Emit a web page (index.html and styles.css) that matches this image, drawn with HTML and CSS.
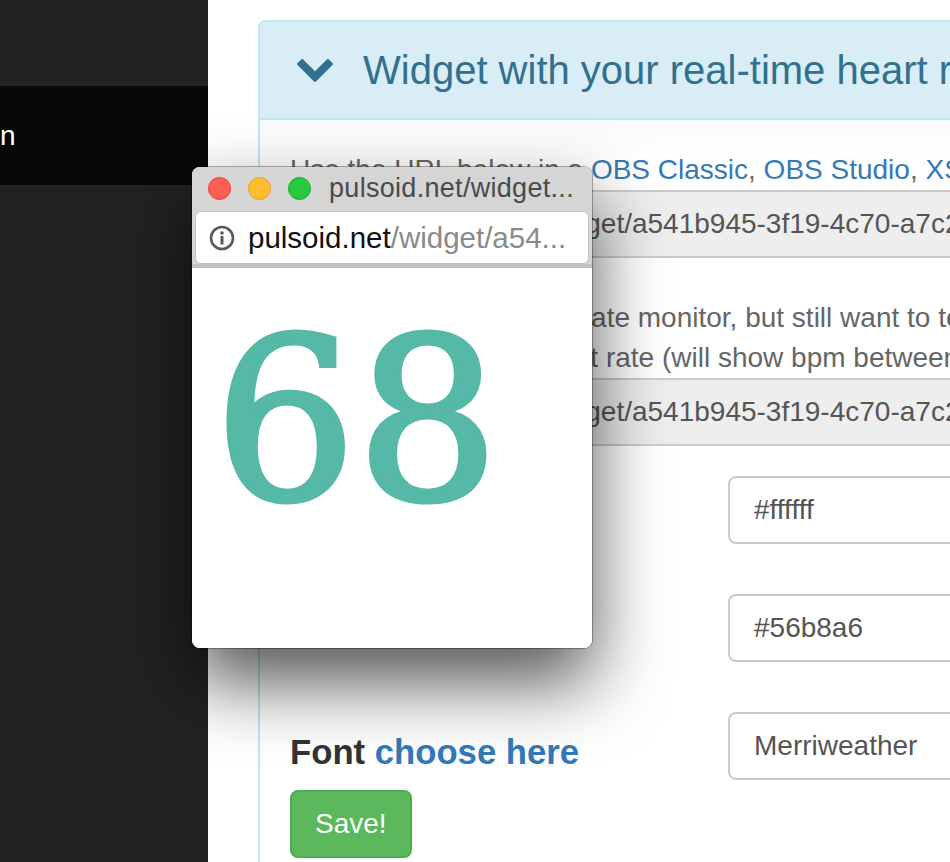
FILE: index.html
```html
<!DOCTYPE html>
<html>
<head>
<meta charset="utf-8">
<title>Pulsoid widget</title>
<link rel="stylesheet" href="styles.css">
</head>
<body>
<div class="layout">
  <aside class="sidebar">
    <div class="nav-item active"><span class="nav-text">n</span></div>
  </aside>
  <main class="main">
    <section class="panel">
      <div class="panel-heading">
        <svg class="chevron" viewBox="90 533 1612 1035" width="36" height="23" aria-hidden="true">
          <path fill="#31708f" d="M1683 808l-742 741q-19 19-45 19t-45-19l-742-741q-19-19-19-45.5t19-45.5l166-165q19-19 45-19t45 19l531 531 531-531q19-19 45-19t45 19l166 165q19 19 19 45.5t-19 45.5z"/>
        </svg>
        <h3 class="panel-title">Widget with your real-time heart rate</h3>
      </div>
      <div class="panel-body">
        <p class="help">Use the URL below in a <a href="#">OBS Classic</a>, <a href="#">OBS Studio</a>, <a href="#">XSplit</a> or any other broadcasting software</p>
        <div class="url-input">https://pulsoid.net/widget/a541b945-3f19-4c70-a7c2-5e81d0b9f3a4</div>
        <p class="help help-spaced">If you don't use a heart rate monitor, but still want to test the widget, use the URL below to<br>try it with a random heart rate (will show bpm between 60 and 100)</p>
        <div class="url-input">https://pulsoid.net/widget/a541b945-3f19-4c70-a7c2-5e81d0b9f3a4?random=true</div>
        <div class="form-grid">
          <div class="label-cell"><h4 class="field-label">Background color</h4></div>
          <div class="input-cell"><div class="form-input">#ffffff</div></div>
          <div class="label-cell"><h4 class="field-label">Text color</h4></div>
          <div class="input-cell"><div class="form-input">#56b8a6</div></div>
          <div class="label-cell">
            <h4 class="field-label">Font <a href="#">choose here</a></h4>
            <button class="btn-save" type="button">Save!</button>
          </div>
          <div class="input-cell"><div class="form-input">Merriweather</div></div>
        </div>
      </div>
    </section>
  </main>
</div>

<div class="popup">
  <div class="titlebar">
    <span class="light red"></span>
    <span class="light yellow"></span>
    <span class="light green"></span>
    <span class="win-title">pulsoid.net/widget...</span>
  </div>
  <div class="toolbar">
    <div class="address">
      <svg class="info" viewBox="0 0 26 26" width="26" height="26" aria-hidden="true">
        <circle cx="13" cy="13" r="11" fill="none" stroke="#5a5a5a" stroke-width="2.6"/>
        <circle cx="13" cy="8" r="1.8" fill="#5a5a5a"/>
        <rect x="11.5" y="11" width="3" height="8.5" rx="0.6" fill="#5a5a5a"/>
      </svg>
      <span class="addr-text"><span class="addr-host">pulsoid.net</span><span class="addr-path">/widget/a54...</span></span>
    </div>
  </div>
  <div class="content">
    <div class="bpm">68</div>
  </div>
</div>
</body>
</html>
```
FILE: styles.css
```css
html, body {
  margin: 0;
  padding: 0;
  height: 862px;
  overflow: hidden;
  background: #ffffff;
  font-family: "Liberation Sans", Arial, sans-serif;
}

.layout {
  display: flex;
  height: 862px;
}

.sidebar {
  width: 208px;
  flex: none;
  background: #222222;
  padding-top: 86px;
  box-sizing: border-box;
}

.nav-item {
  height: 99px;
  display: flex;
  align-items: center;
  color: #ffffff;
  font-size: 28px;
}

.nav-item.active {
  background: #080808;
}

.main {
  flex: 1;
  min-width: 0;
  overflow: hidden;
  padding: 20px 0 0 50px;
}

.panel {
  width: 1100px;
  height: 1000px;
  border: 2px solid #bce8f1;
  border-radius: 8px;
  box-sizing: border-box;
}

.panel-heading {
  height: 96px;
  background: #d9edf7;
  border-bottom: 2px solid #bce8f1;
  border-radius: 6px 6px 0 0;
  display: flex;
  align-items: center;
  padding-left: 37px;
  gap: 30px;
}

.chevron {
  flex: none;
}

.panel-title {
  margin: 0;
  font-size: 40px;
  font-weight: normal;
  color: #31708f;
  white-space: nowrap;
}

.panel-body {
  padding: 30px;
  background: linear-gradient(#fafafa, #ffffff 40px);
}

.help {
  margin: 0;
  font-size: 28px;
  line-height: 40px;
  color: #666666;
  white-space: nowrap;
}

.help a, .field-label a {
  color: #337ab7;
  text-decoration: none;
}

.help-spaced {
  margin-top: 40px;
}

.url-input {
  height: 68px;
  box-sizing: border-box;
  border: 2px solid #cccccc;
  border-radius: 8px;
  background: #eeeeee;
  font-size: 28px;
  color: #555555;
  padding: 0 24px;
  display: flex;
  align-items: center;
  white-space: nowrap;
  overflow: hidden;
}

.form-grid {
  display: grid;
  grid-template-columns: 438px 1fr;
  row-gap: 50px;
  margin-top: 30px;
}

.label-cell {
  padding-top: 20px;
}

.field-label {
  margin: 0;
  font-size: 34.7px;
  line-height: 40px;
  font-weight: bold;
  color: #333333;
  white-space: nowrap;
}

.form-input {
  height: 68px;
  box-sizing: border-box;
  border: 2px solid #cccccc;
  border-radius: 8px;
  background: #ffffff;
  font-size: 28px;
  color: #555555;
  padding: 0 24px;
  display: flex;
  align-items: center;
}

.btn-save {
  margin-top: 18px;
  height: 68px;
  padding: 0 23px;
  background: #5cb85c;
  border: 2px solid #4cae4c;
  border-radius: 8px;
  color: #ffffff;
  font-family: "Liberation Sans", Arial, sans-serif;
  font-size: 28px;
}

/* floating browser window */
.popup {
  position: absolute;
  left: 192px;
  top: 167px;
  width: 400px;
  height: 481px;
  border-radius: 8px;
  overflow: hidden;
  display: flex;
  flex-direction: column;
  background: #ffffff;
  box-shadow: 0 0 0 1px rgba(0, 0, 0, 0.3), 0 34px 72px rgba(0, 0, 0, 0.68);
}

.titlebar {
  height: 42px;
  flex: none;
  background: #d5d5d5;
  display: flex;
  align-items: center;
  padding-left: 16px;
  gap: 17px;
}

.light {
  width: 23px;
  height: 23px;
  border-radius: 50%;
  box-sizing: border-box;
  flex: none;
}

.light.red { background: #fd5f57; border: 1px solid #e0443e; }
.light.yellow { background: #febc2e; border: 1px solid #dea123; }
.light.green { background: #28c840; border: 1px solid #1aab29; }

.win-title {
  margin-left: 1px;
  font-size: 27px;
  letter-spacing: 0.3px;
  color: #4a4a4a;
  white-space: nowrap;
}

.toolbar {
  flex: none;
  background: #d5d5d5;
  padding: 2px 3px 0;
  border-bottom: 4px solid #c2c2c2;
}

.address {
  height: 53px;
  box-sizing: border-box;
  background: #ffffff;
  border: 1px solid #c4c4c4;
  border-radius: 6px;
  display: flex;
  align-items: center;
  padding-left: 13px;
  gap: 13px;
  font-size: 29.5px;
  white-space: nowrap;
  overflow: hidden;
}

.info {
  flex: none;
}

.addr-host {
  color: #111111;
}

.addr-path {
  color: #8a8a8a;
}

.content {
  flex: 1;
  background: #ffffff;
  padding: 42px 0 0 22px;
}

.bpm {
  font-family: "DejaVu Serif", "Liberation Serif", serif;
  font-size: 224px;
  line-height: 1;
  color: #56b8a6;
  -webkit-text-stroke: 5px #56b8a6;
}
```
